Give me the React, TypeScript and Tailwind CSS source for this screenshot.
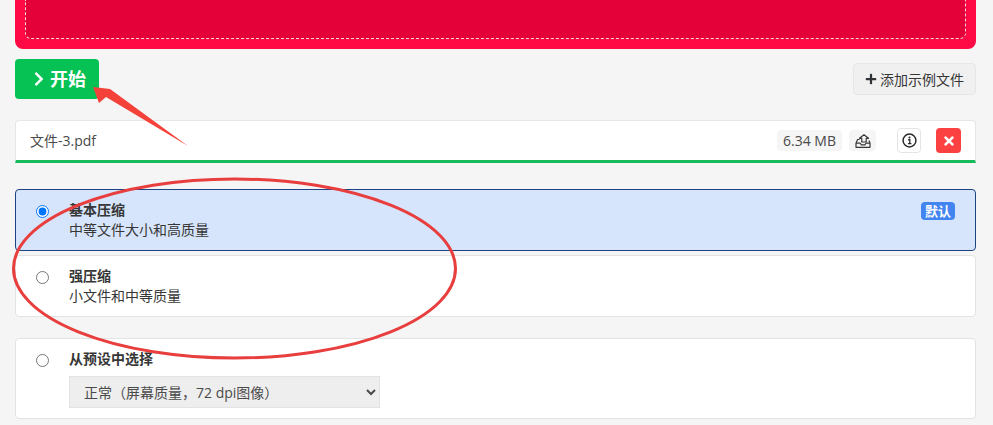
import { FaChevronRight, FaPlus, FaTimes } from "react-icons/fa";

const Option = ({ title, desc, checked, badge }: { title: string; desc: string; checked?: boolean; badge?: boolean }) => (
  <div
    className={`flex h-[62px] items-start rounded border pl-[20px] pr-[20px] pt-[10px] ${
      checked ? "border-[#1d4383] bg-[#d6e5fb]" : "border-[#e3e3e3] bg-white"
    }`}
  >
    <input type="radio" name="level" defaultChecked={checked} className="mt-[5px] h-[13px] w-[13px] shrink-0" />
    <div className="ml-[20px] flex-1 text-[14px] leading-[20px] text-[#363636]">
      <div className="font-bold">{title}</div>
      <div>{desc}</div>
    </div>
    {badge && (
      <span className="mt-[2px] rounded-[4px] bg-[#4285f0] px-[4px] text-[13px] font-bold leading-[18px] text-white">默认</span>
    )}
  </div>
);

export default function App() {
  return (
    <div className="relative h-[425px] w-[993px] overflow-hidden bg-[#f5f5f5] pl-[15px] pr-[17px] font-['Open_Sans','Noto_Sans_CJK_SC',sans-serif] text-[#363636]">
      {/* drop zone, cut off by the top of the page */}
      <div className="flex h-[49px] rounded-b-lg bg-[#ff0a45] px-[10px] pb-[10px]">
        <div className="flex-1 rounded-b-md border border-t-0 border-dashed border-[#f6d5dc] bg-[#e40038]" />
      </div>

      <div className="mt-[10px] flex items-center justify-between">
        <button className="flex h-[40px] w-[84px] items-center justify-center gap-[3px] rounded bg-[#06c153] pl-[3px] text-[18px] font-bold text-white">
          <FaChevronRight className="text-[16px]" />
          开始
        </button>
        <button className="flex h-[32px] w-[123px] items-center justify-center gap-[3px] rounded border border-[#e6e6e6] bg-[#f0f0f0] text-[14px]">
          <FaPlus className="text-[12px] text-[#2f3338]" />
          添加示例文件
        </button>
      </div>

      <div className="mt-[21px] flex h-[43px] items-center rounded-t border border-b-[3px] border-[#e6e6e6] border-b-[#18bb5c] bg-white pl-[14px] pr-[14px] text-[14px] text-[#4a4a4a]">
        <span className="flex-1">文件-3.pdf</span>
        <span className="flex h-[21px] w-[65px] items-center justify-center rounded bg-[#f5f5f5]">6.34 MB</span>
        <span className="ml-[7px] flex h-[21px] w-[27px] items-center justify-center rounded bg-[#f5f5f5]">
          <svg width="16" height="14" viewBox="0 0 16 14" fill="none" stroke="#363636" strokeWidth="1.200" strokeLinejoin="round">
            <path d="M9 .7 13.500 4.300H11.200V8H6.800V4.300H4.500z" />
            <path d="M4.500 5.500H2.600L1 9.200V13.300H15V9.200L14 6.500" />
            <path d="M1 9.200H5.200L6.200 10.800H10L11 9.200H15" />
          </svg>
        </span>
        <span className="ml-[21px] flex h-[25px] w-[24px] items-center justify-center rounded border border-[#e3e6e8] bg-white">
          <svg width="15" height="15" viewBox="0 0 14 14" fill="none">
            <circle cx="7" cy="7" r="6" stroke="#2b2b2b" strokeWidth="1.400" />
            <circle cx="7" cy="4.200" r="1" fill="#2b2b2b" />
            <path d="M5.700 6.300H7.300V10M5.500 10H8.800" stroke="#2b2b2b" strokeWidth="1.200" />
          </svg>
        </span>
        <span className="ml-[15px] flex h-[25px] w-[25px] items-center justify-center rounded bg-[#fb4141] text-[14px] text-white">
          <FaTimes />
        </span>
      </div>

      <div className="mt-[26px] flex flex-col gap-[4px]">
        <Option title="基本压缩" desc="中等文件大小和高质量" checked badge />
        <Option title="强压缩" desc="小文件和中等质量" />
      </div>

      <div className="mt-[21px] flex h-[81px] items-start rounded border border-[#e3e3e3] bg-white pl-[20px] pt-[10px]">
        <input type="radio" name="level" className="mt-[5px] h-[13px] w-[13px] shrink-0" />
        <div className="ml-[20px] text-[14px] leading-[20px]">
          <div className="font-bold">从预设中选择</div>
          <select className="mt-[7px] h-[32px] w-[311px] border border-[#e3e3e3] bg-[#eeeeee] pl-[10px] text-[14px] text-[#4a4a4a]">
            <option>正常（屏幕质量，72 dpi图像）</option>
          </select>
        </div>
      </div>

      {/* red annotations drawn over the page */}
      <svg className="pointer-events-none absolute left-0 top-0" width="993" height="425" fill="none">
        <polygon points="93,87 110,89 188,146 106,97 99,103" fill="#f4413a" />
        <ellipse cx="234.500" cy="268.500" rx="221" ry="89.500" stroke="#e83e3e" strokeWidth="3" />
      </svg>
    </div>
  );
}
